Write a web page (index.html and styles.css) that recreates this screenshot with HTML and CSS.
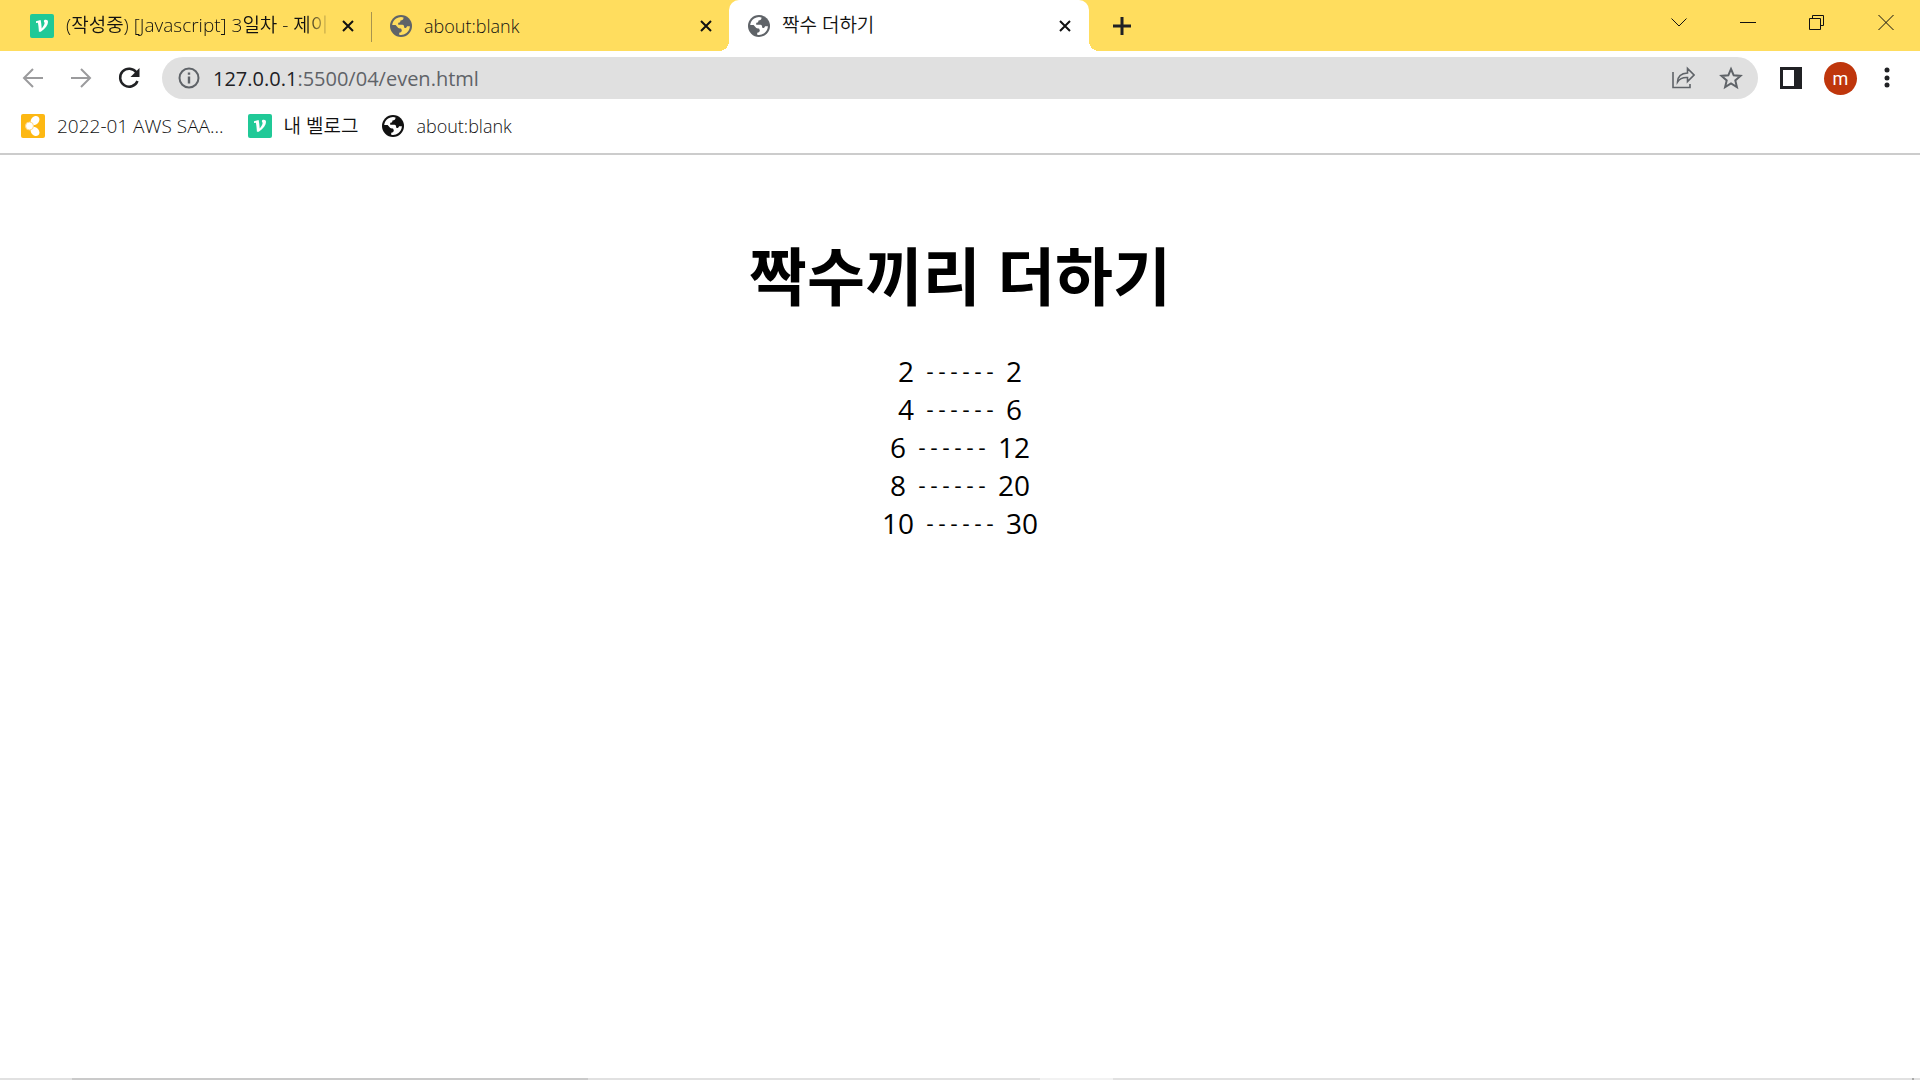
FILE: index.html
```html
<!DOCTYPE html>
<html lang="ko">
<head>
<meta charset="utf-8">
<title>짝수 더하기</title>
<link rel="stylesheet" href="styles.css">
</head>
<body>
<svg class="defs" aria-hidden="true">
  <symbol id="globe" viewBox="0 0 22 22">
    <circle cx="11" cy="11" r="11" fill="currentColor"/>
    <path class="cut" d="M2.200 10A9 9 0 0 1 13.500 2.400C13.600 4.500 12.500 5.200 10.500 5.400 10.500 7 9.600 7.600 8.200 7.800V9.800H12.500C13.700 9.800 14.200 10.700 14.200 12.800 15.500 13.200 16.800 12.800 17 11.200H19.900A9 9 0 0 1 9.200 19.700V17.800C10.800 17.600 11.800 16.800 11.800 15.200L11 13.600C9.500 13.600 8.500 13.200 7.600 12.200L5.600 10z"/>
  </symbol>
  <symbol id="velog" viewBox="0 0 24 24">
    <rect width="24" height="24" rx="2" fill="#20c997"/>
    <path fill="#fff" d="M6 7.300 10.600 6c.6 2.600 1 5.800 1.100 8.500 2-2.300 2.900-4.200 2.900-5.400 0-.8-.7-1.200-.7-1.900 0-.9.800-1.400 1.900-1.400 1.400 0 2.200.8 2.200 2.100 0 2.900-2.400 6.200-7.200 9.800H8.900c-.2-3.600-.5-6.500-1-8.900L6 9.100z"/>
  </symbol>
  <symbol id="close" viewBox="0 0 12 12">
    <path d="M1 1l10 10M11 1L1 11" fill="none" stroke="currentColor" stroke-width="2"/>
  </symbol>
</svg>

<header class="browser">
  <div class="tabstrip">
    <div class="tab tab-first">
      <svg class="favicon"><use href="#velog"/></svg>
      <span class="tab-title tab-title-long large">(작성중) [Javascript] 3일차 - 제이</span>
      <button class="tab-close" aria-label="탭 닫기"><svg><use href="#close"/></svg></button>
    </div>
    <div class="tab tab-second">
      <svg class="globe"><use href="#globe"/></svg>
      <span class="tab-title">about:blank</span>
      <button class="tab-close" aria-label="탭 닫기"><svg><use href="#close"/></svg></button>
    </div>
    <div class="tab tab-active">
      <svg class="globe"><use href="#globe"/></svg>
      <span class="tab-title large">짝수 더하기</span>
      <button class="tab-close" aria-label="탭 닫기"><svg><use href="#close"/></svg></button>
    </div>
    <button class="new-tab" aria-label="새 탭"><svg viewBox="0 0 18 18"><path d="M9 0v18M0 9h18" stroke="#202124" stroke-width="3"/></svg></button>
    <div class="window-controls">
      <button aria-label="탭 검색"><svg viewBox="0 0 16 16"><path d="M.5 4.500 8 12l7.500-7.500"/></svg></button>
      <button aria-label="최소화"><svg viewBox="0 0 16 16"><path d="M0 8.500h16"/></svg></button>
      <button aria-label="이전 크기로"><svg viewBox="0 0 16 16"><path d="M.5 4.500h11v11H.5zM3.500 4V1.500h11v10H12"/></svg></button>
      <button aria-label="닫기"><svg viewBox="0 0 16 16"><path d="M.5 1l15 15M15.500 1l-15 15"/></svg></button>
    </div>
  </div>

  <div class="toolbar">
    <button class="nav" aria-label="뒤로"><svg viewBox="0 0 22 22"><path d="M21 11H2M11 2L2 11l9 9" fill="none" stroke="#9b9b9d" stroke-width="2"/></svg></button>
    <button class="nav" aria-label="앞으로"><svg viewBox="0 0 22 22"><path d="M1 11h19M11 2l9 9-9 9" fill="none" stroke="#9b9b9d" stroke-width="2"/></svg></button>
    <button class="nav" aria-label="새로고침"><svg viewBox="0 0 22 22"><path d="M18.500 5.500A9 9 0 1 0 19.500 14" fill="none" stroke="#202124" stroke-width="2.500"/><path d="M21.500 1v9h-9z" fill="#202124"/></svg></button>
    <div class="omnibox">
      <svg class="info" viewBox="0 0 22 22"><circle cx="11" cy="11" r="9.500" fill="none" stroke="#5f6368" stroke-width="2"/><path d="M11 5.500v2.200M11 9.500v7" stroke="#5f6368" stroke-width="2.400"/></svg>
      <div class="address"><span class="address-text" aria-hidden="true"><b>127.0.0.1</b>:5500/04/even.html</span><input type="text" aria-label="주소"></div>
      <button aria-label="공유"><svg viewBox="0 0 24 24"><path d="M2 6v15.500h17V18M6.500 16C6.700 10.800 10 7.300 16.500 7V2.500L23 9l-6.500 6.500V11.500C11.500 11.200 8.500 12.800 6.500 16z" fill="none" stroke="#5f6368" stroke-width="1.600"/></svg></button>
      <button aria-label="북마크"><svg viewBox="0 0 24 24"><path d="M12 3l2.700 6.300 6.800.6-5.200 4.500 1.600 6.700L12 17.500l-5.900 3.600 1.600-6.700-5.200-4.500 6.800-.6z" fill="none" stroke="#5f6368" stroke-width="2"/></svg></button>
    </div>
    <button class="panel" aria-label="측면 패널"><svg viewBox="0 0 22 22"><path d="M0 0h22v22H0zM3 3v16h11V3z" fill="#202124" fill-rule="evenodd"/></svg></button>
    <button class="profile">m</button>
    <button class="more" aria-label="메뉴"><svg viewBox="0 0 6 22"><g fill="#202124"><circle cx="3" cy="3" r="2.500"/><circle cx="3" cy="11" r="2.500"/><circle cx="3" cy="18" r="2.500"/></g></svg></button>
  </div>

  <nav class="bookmarks">
    <a class="large" href="#aws"><svg class="favicon" viewBox="0 0 24 24"><rect width="24" height="24" rx="2" fill="#fdb813"/><g fill="#fff"><ellipse cx="14" cy="6.500" rx="5" ry="4" transform="rotate(-50 14 6.500)"/><ellipse cx="14" cy="17.500" rx="5" ry="4" transform="rotate(50 14 17.500)"/></g><circle cx="8.500" cy="12" r="4" fill="#fff" stroke="#fdd98a"/></svg>2022-01 AWS SAA...</a>
    <a class="large" href="#velog-home"><svg class="favicon"><use href="#velog"/></svg>내 벨로그</a>
    <a href="#blank"><svg class="globe"><use href="#globe"/></svg>about:blank</a>
  </nav>
</header>

<main class="page">
  <h1>짝수끼리 더하기</h1>
  <div class="sums">
    <p>2 <span>------</span> 2</p>
    <p>4 <span>------</span> 6</p>
    <p>6 <span>------</span> 12</p>
    <p>8 <span>------</span> 20</p>
    <p>10 <span>------</span> 30</p>
  </div>
</main>

<footer class="edge"><i class="edge-a"></i><i class="edge-b"></i><i class="edge-c"></i><i class="edge-d"></i><i class="edge-e"></i></footer>
</body>
</html>
```

FILE: styles.css
```css
* { box-sizing: border-box; }

body {
  margin: 0;
  min-height: 100vh;
  display: flex;
  flex-direction: column;
  background: #fff;
  color: #202124;
  font-family: "Open Sans", "Noto Sans CJK KR", sans-serif;
  font-size: 18px;
  font-weight: 360;
}

svg { display: block; flex: none; }
.defs { position: absolute; width: 0; height: 0; }

button {
  display: flex;
  align-items: center;
  justify-content: center;
  padding: 0;
  border: 0;
  background: none;
  color: inherit;
  font: inherit;
}

.favicon { width: 24px; height: 24px; }
.globe { width: 22px; height: 22px; }
.cut { fill: var(--surface, #fff); }
.large { font-size: 19px; line-height: 26px; }

.tabstrip {
  display: flex;
  height: 51px;
  background: #ffdd5e;
}
.tab {
  display: flex;
  align-items: center;
  gap: 12px;
  width: 360px;
  color: #111;
}
.tab .globe { color: #5f6368; }
.tab-first { width: 372px; padding: 0 18px 0 30px; position: relative; }
.tab-first::after {
  content: "";
  position: absolute;
  right: 0;
  top: 12px;
  width: 1px;
  height: 30px;
  background: #a8944e;
}
.tab-second { width: 357px; padding: 0 17px 0 18px; --surface: #ffdd5e; }
.tab-active {
  position: relative;
  padding: 0 18px 0 19px;
  background: #fff;
  border-radius: 10px 10px 0 0;
}
.tab-active::before,
.tab-active::after {
  content: "";
  position: absolute;
  bottom: 0;
  width: 10px;
  height: 10px;
}
.tab-active::before { right: 100%; background: radial-gradient(circle at 0 0, #ffdd5e 10px, #fff 10px); }
.tab-active::after { left: 100%; background: radial-gradient(circle at 100% 0, #ffdd5e 10px, #fff 10px); }
.tab-title {
  flex: 1;
  min-width: 0;
  overflow: hidden;
  white-space: nowrap;
}
.tab .large { padding-bottom: 2px; }
.tab-title-long { mask-image: linear-gradient(to left, transparent, #000 24px); }
.tab-close svg { width: 12px; height: 12px; }
.new-tab { width: 66px; }
.new-tab svg { width: 18px; height: 18px; }

.window-controls {
  display: flex;
  margin-left: auto;
  height: 43px;
}
.window-controls button { width: 69px; }
.window-controls svg { width: 16px; height: 16px; fill: none; stroke: #111; }

.toolbar {
  display: flex;
  align-items: center;
  height: 54px;
  padding: 0 17px 0 9px;
}
.nav { width: 48px; height: 42px; }
.nav svg { width: 22px; height: 22px; }
.omnibox {
  display: flex;
  align-items: center;
  flex: 1;
  height: 42px;
  margin-left: 9px;
  padding: 0 3px 0 16px;
  border-radius: 21px;
  background: #e0e0e0;
}
.info { width: 22px; height: 22px; }
.address { position: relative; flex: 1; margin-left: 13px; }
.address-text { font-size: 20px; font-weight: 400; color: #5f6368; }
.address-text b { font-weight: inherit; color: #202124; }
.address input { position: absolute; inset: 0; width: 100%; border: 0; background: none; }
.omnibox button { width: 48px; height: 42px; }
.omnibox button svg { width: 24px; height: 24px; }
.panel { width: 66px; }
.panel svg { width: 22px; height: 22px; }
.profile {
  width: 33px;
  height: 33px;
  border-radius: 50%;
  background: #bf360c;
  color: #fff;
  font-family: Roboto, sans-serif;
  font-weight: 400;
}
.more { width: 32px; margin-left: 14px; }
.more svg { width: 6px; height: 22px; }

.bookmarks {
  display: flex;
  align-items: center;
  gap: 24px;
  height: 50px;
  padding: 0 21px 7px;
  border-bottom: 2px solid #ccc;
}
.bookmarks a {
  display: flex;
  align-items: center;
  gap: 12px;
  color: #111;
  text-decoration: none;
}

.page {
  flex: 1;
  padding-top: 78px;
  text-align: center;
  color: #000;
}
h1 {
  margin: 0 0 33px;
  font-size: 63px;
  line-height: 86px;
  font-weight: 700;
}
.sums p {
  display: flex;
  justify-content: center;
  align-items: center;
  gap: 10px;
  margin: 0;
  font-size: 28px;
  line-height: 38px;
  font-weight: 400;
}
.sums span {
  padding-top: 6px;
  font-family: "Liberation Mono", monospace;
  font-size: 20px;
  line-height: 28px;
}

.edge { display: flex; height: 2px; background: #e1e1e1; }
.edge-a { width: 72px; }
.edge-b { width: 516px; background: #cacaca; }
.edge-c { width: 452px; }
.edge-d { width: 73px; background: #f2f2f2; }
.edge-e { width: 2px; margin-left: auto; margin-right: 6px; background: #aaa; }
```
